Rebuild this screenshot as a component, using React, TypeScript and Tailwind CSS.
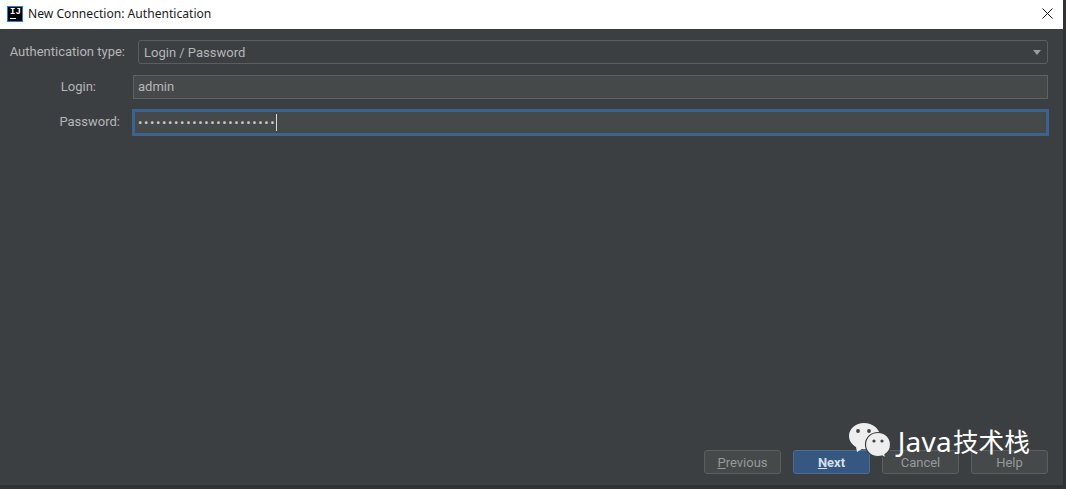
const uiFont = "font-['Roboto','Noto_Sans',sans-serif]";

function IdeaLogo() {
  return (
    <div className="w-4 h-4 bg-black border border-[#1f7fe0] flex flex-col shrink-0 pl-[2px] pt-[1px] mb-[1px]">
      <span className="text-white text-[9px] leading-[9px] font-bold font-['Liberation_Mono',monospace]">IJ</span>
      <span className="w-[6px] h-px bg-white mt-[1px]" />
    </div>
  );
}

function WeChatMark() {
  return (
    <svg width="42" height="35" viewBox="0 0 42 35" className="shrink-0">
      <path d="M15 0C6.700 0 0 5.800 0 13C0 17.500 2.700 21.500 7 24L8 29L13 26C14 26.100 15 26.200 16 26.200C24 26.200 31 20 31 13C31 5.800 23.300 0 15 0Z" fill="#eeeeee" />
      <circle cx="9" cy="8" r="1.900" fill="#3f4244" />
      <circle cx="20" cy="8" r="1.900" fill="#3f4244" />
      <path d="M29 9.500C22 9.500 16.500 14.500 16.500 21.500C16.500 28.500 22 33.500 29 33.500C30.500 33.500 31.500 33.300 33 33L36.500 35L36 31.500C39.500 29.500 41.500 26 41.500 21.500C41.500 14.500 36 9.500 29 9.500Z" fill="#eeeeee" stroke="#3c3f41" strokeWidth="1.200" />
      <circle cx="25" cy="18" r="1.600" fill="#3f4244" />
      <circle cx="33" cy="18" r="1.600" fill="#3f4244" />
    </svg>
  );
}

function FooterButton({ label, mnemonic, rest, primary }: { label?: string; mnemonic?: string; rest?: string; primary?: boolean }) {
  return (
    <div
      className={
        primary
          ? "w-[77px] h-6 pt-px rounded-[3px] border border-[#4a6f96] bg-[#365880] text-[#d5dde6] font-bold text-[13px] leading-none flex items-center justify-center"
          : "w-[77px] h-6 pt-px rounded-[3px] border border-[#5b5d5f] bg-[#45494a] text-[#97999b] text-[13px] leading-none flex items-center justify-center"
      }
    >
      {mnemonic ? (
        <span>
          <span className="underline">{mnemonic}</span>
          {rest}
        </span>
      ) : (
        label
      )}
    </div>
  );
}

export default function App() {
  return (
    <div className={`w-[1066px] h-[489px] overflow-hidden bg-[#2f3234] flex flex-col ${uiFont}`}>
      <div className="h-[29px] bg-white flex items-center pl-[7px] pr-[10px] shrink-0 mr-[3px]">
        <IdeaLogo />
        <span className="ml-[5px] mb-px text-[12.100px] text-[#1a1a1a] font-['Noto_Sans',sans-serif]">New Connection: Authentication</span>
        <svg width="11" height="11" viewBox="0 0 11 11" className="ml-auto mb-[3px]">
          <path d="M0.500 0.500L10.500 10.500M10.500 0.500L0.500 10.500" stroke="#111111" strokeWidth="1" fill="none" />
        </svg>
      </div>

      <div className="flex-1 mr-[3px] mb-[4px] bg-[#3c3f41] flex flex-col text-[13px] text-[#b4b6b8] pr-[15px]">
        <div className="grid grid-cols-[125px_1fr] gap-y-[11px] pt-[11px] items-center">
          <div className="text-right">Authentication type:</div>
          <div className="ml-[13px] h-6 pt-px rounded-[3px] border border-[#5b5d5f] flex items-center justify-between pl-[5px] pr-[6px]">
            <span>Login / Password</span>
            <span className="w-0 h-0 border-l-[4.5px] border-r-[4.5px] border-t-[5px] border-l-transparent border-r-transparent border-t-[#9a9c9e]" />
          </div>
          <div className="text-right pr-[29px]">Login:</div>
          <div className="ml-2 h-6 border border-[#5f6163] bg-[#45494a] flex items-center pl-[4px]">admin</div>
          <div className="text-right pr-[5px] -mt-[3px]">Password:</div>
          <div className="ml-[7px] -mr-px -mt-px h-[27px] border-[3px] border-[#3a6391] bg-[#45494a] flex items-center pl-[3px]">
            <span className="tracking-[1.630px] text-[13px] text-[#c4c6c8] leading-none pb-px">{"•".repeat(23)}</span>
            <span className="w-px h-[17px] bg-[#d8d8d8]" />
          </div>
        </div>

        <div className="mt-auto flex justify-end gap-[12px] mb-[11px] relative">
          <FooterButton mnemonic="P" rest="revious" />
          <FooterButton mnemonic="N" rest="ext" primary />
          <FooterButton label="Cancel" />
          <FooterButton label="Help" />
          <div className="absolute right-[18px] -top-[27px] h-[35px] flex items-center">
            <WeChatMark />
            <span className="ml-[7px] text-[28px] tracking-[0.250px] leading-none text-white font-['Noto_Sans',sans-serif]">Java</span>
            <span className="ml-px text-[25.700px] leading-none text-white font-['Noto_Sans_CJK_SC',sans-serif]">技术栈</span>
          </div>
        </div>
      </div>
    </div>
  );
}
